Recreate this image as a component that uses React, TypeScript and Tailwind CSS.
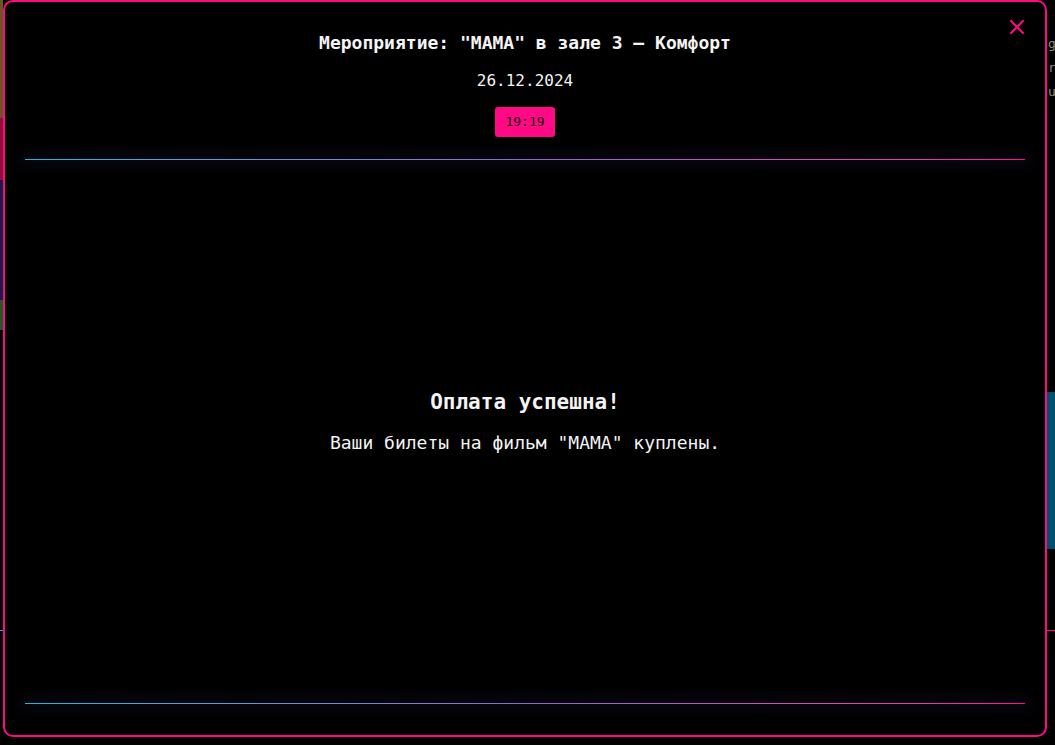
const mono = { fontFamily: '"DejaVu Sans Mono", "Liberation Mono", monospace' };

function Divider() {
  return (
    <div className="h-px w-full bg-gradient-to-r from-[#1fb5d6] via-[#8a6ad6] to-[#ff0a84] shadow-[0_0_14px_6px_rgba(40,30,70,0.25)]" />
  );
}

function CloseIcon() {
  return (
    <svg width="16" height="16" viewBox="0 0 16 16" fill="none" stroke="#ff0a84" strokeWidth="2" strokeLinecap="square">
      <path d="M2 2 L14 14 M14 2 L2 14" />
    </svg>
  );
}

function Backdrop() {
  return (
    <div className="flex h-full w-full">
      <div className="flex w-[3px] flex-col">
        <div className="h-[118px] bg-[#6a5526]" />
        <div className="h-[62px] bg-[#8e1238]" />
        <div className="h-[120px] bg-[#1a1c46]" />
        <div className="h-[30px] bg-[#1e5a22]" />
        <div className="h-[300px]" />
        <div className="h-px bg-[#1fb5d6]" />
      </div>
      <div className="flex-1" />
      <div className="flex w-[8px] flex-col overflow-hidden pt-[32px] text-[13px] leading-[24px] text-[#8a8a8a]" style={mono}>
        <span className="whitespace-nowrap pl-[1px]">g</span>
        <span className="whitespace-nowrap pl-[1px]">r</span>
        <span className="whitespace-nowrap pl-[1px]">u</span>
        <div className="mt-[288px] h-[157px] w-full bg-[#00506e]" />
        <div className="mt-[81px] h-px w-full bg-[#ff0a84]" />
      </div>
    </div>
  );
}

export default function App() {
  return (
    <div className="relative h-[745px] w-[1055px] overflow-hidden bg-black" style={mono}>
      <Backdrop />
      <div className="absolute left-[3px] top-0 flex h-[737px] w-[1044px] flex-col rounded-[10px] border-2 border-[#ff0a84] bg-black px-5 pb-[31px] text-[#f4f4f4]">
        <button className="absolute right-[20px] top-[17px]">
          <CloseIcon />
        </button>

        <div className="flex flex-col items-center pt-[29px]">
          <h2 className="text-[18px] font-bold leading-6">Мероприятие: "МАМА" в зале 3 — Комфорт</h2>
          <p className="mt-[14px] text-[16px] leading-6">26.12.2024</p>
          <span className="mt-[14px] flex h-[30px] w-[60px] items-center justify-center rounded-[3px] bg-[#ff0a84] text-[13px] text-[#1a0010]">
            19:19
          </span>
        </div>

        <div className="mt-[22px]">
          <Divider />
        </div>

        <div className="flex flex-1 flex-col items-center justify-center pb-[20px]">
          <h3 className="text-[21px] font-bold leading-7">Оплата успешна!</h3>
          <p className="mt-[15px] text-[18px] leading-6">Ваши билеты на фильм "МАМА" куплены.</p>
        </div>

        <Divider />
      </div>
    </div>
  );
}
